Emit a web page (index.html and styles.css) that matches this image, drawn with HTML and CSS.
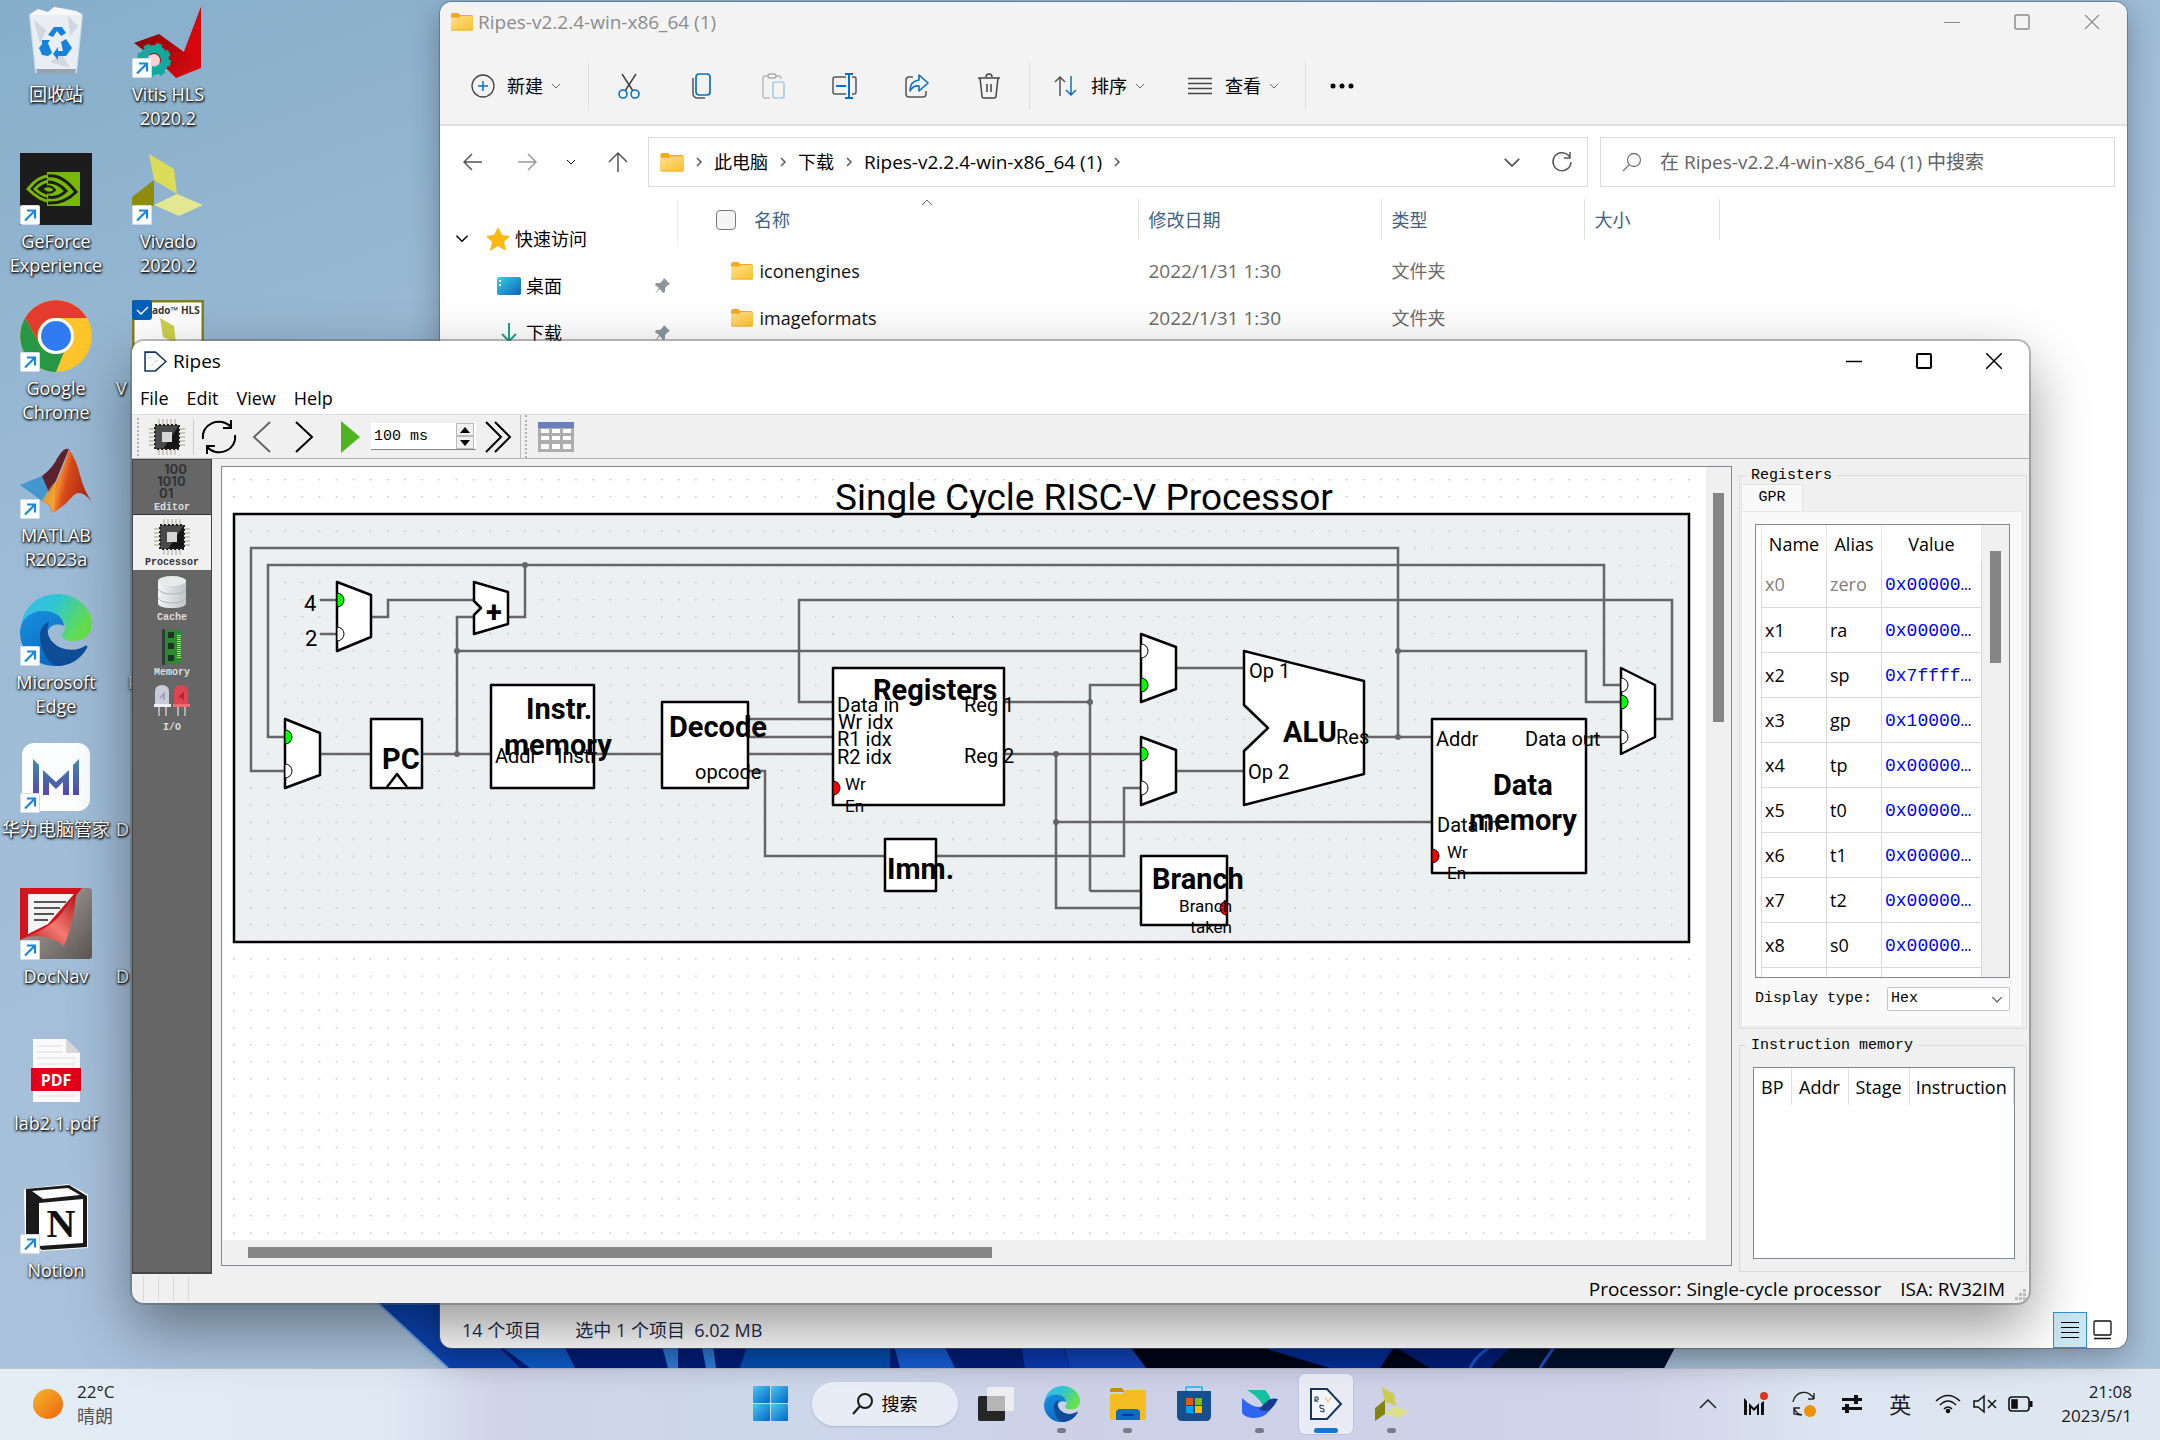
FILE: index.html
```html
<!DOCTYPE html>
<html lang="zh-CN">
<head>
<meta charset="utf-8">
<title>Ripes</title>
<link rel="stylesheet" href="styles.css">
</head>
<body>
<svg class="defs" width="0" height="0" aria-hidden="true">
  <defs>
    <linearGradient id="gFolder" x1="0" y1="0" x2="1" y2="1"><stop offset="0" stop-color="#ffe08a"/><stop offset="1" stop-color="#fbc02f"/></linearGradient>
    <linearGradient id="gEdgeA" x1="0" y1="0" x2="1" y2="0.4"><stop offset="0" stop-color="#39b8f5"/><stop offset="0.5" stop-color="#2fc6cf"/><stop offset="1" stop-color="#66e04b"/></linearGradient>
    <linearGradient id="gEdgeB" x1="0" y1="0" x2="0.6" y2="1"><stop offset="0" stop-color="#1791dd"/><stop offset="1" stop-color="#0a66c2"/></linearGradient>
    <linearGradient id="gM" x1="0" y1="0" x2="0" y2="1"><stop offset="0" stop-color="#3e8fa8"/><stop offset="1" stop-color="#5546b0"/></linearGradient>
    <linearGradient id="gMat" x1="0" y1="0" x2="1" y2="0.3"><stop offset="0" stop-color="#7a1d10"/><stop offset="0.45" stop-color="#f58a2c"/><stop offset="0.6" stop-color="#d84a1c"/><stop offset="1" stop-color="#b02a12"/></linearGradient>
    <linearGradient id="gSun" x1="0" y1="0" x2="1" y2="1"><stop offset="0" stop-color="#f4b62e"/><stop offset="1" stop-color="#f0640c"/></linearGradient>
    <linearGradient id="gWin" x1="0" y1="0" x2="1" y2="1"><stop offset="0" stop-color="#4cc6ee"/><stop offset="1" stop-color="#0067c8"/></linearGradient>
    <linearGradient id="gDesk" x1="0" y1="0" x2="1" y2="1"><stop offset="0" stop-color="#34d3e6"/><stop offset="1" stop-color="#0c62b8"/></linearGradient>
    <linearGradient id="gGrey" x1="0" y1="0" x2="1" y2="1"><stop offset="0" stop-color="#b9b4b0"/><stop offset="1" stop-color="#5c5653"/></linearGradient>
    <linearGradient id="gRed" x1="0" y1="1" x2="1" y2="0"><stop offset="0" stop-color="#b3131a"/><stop offset="0.5" stop-color="#f27a70"/><stop offset="1" stop-color="#b3131a"/></linearGradient>
    <linearGradient id="gVitis" x1="0" y1="0" x2="1" y2="1"><stop offset="0" stop-color="#6d0003"/><stop offset="1" stop-color="#e30b12"/></linearGradient>
    <linearGradient id="gCyl" x1="0" y1="0" x2="1" y2="0"><stop offset="0" stop-color="#f2f3f3"/><stop offset="1" stop-color="#bfc4c6"/></linearGradient>
    <symbol id="shortcut" viewBox="0 0 20 20"><rect x="0.5" y="0.5" width="19" height="19" rx="1" fill="#fff" stroke="#d5dbe6"/><path d="M5 15.500 14 6.500M7 5.500h8v8" fill="none" stroke="#1787e0" stroke-width="2.200"/></symbol>
    <symbol id="folder" viewBox="0 0 22 18"><path d="M0 2q0-2 2-2h5q1 0 2 2h11q2 0 2 2v12q0 1-1 1H1q-1 0-1-1z" fill="#f4a81d"/><path d="M0 4.500h9l1-1.500h11q1 0 1 1v12.500q0 1-1 1H1q-1 0-1-1z" fill="url(#gFolder)"/><path d="M0.500 17h21" stroke="#eeb02c"/></symbol>
    <symbol id="chip" viewBox="0 0 36 36"><path d="M10 0v36M14 0v36M18 0v36M22 0v36M26 0v36M0 10h36M0 14h36M0 18h36M0 22h36M0 26h36" stroke="#c8c7b7" stroke-width="1.800"/><rect x="6" y="6" width="24" height="24" rx="1" fill="#4a4a4a"/><path d="M30 6v24H14z" fill="#161616"/><rect x="6" y="6" width="24" height="24" fill="none" stroke="#222" stroke-width="2" stroke-dasharray="2 2"/><rect x="13" y="13" width="10" height="10" fill="#d6d6d6"/></symbol>
    <symbol id="edge" viewBox="0 0 72 72"><path d="M1 36C1 14 18 0 37 0c22 0 35 16 35 30 0 10-8 17-18 17-7 0-12-2-12-5 0-2 3-4 3-9 0-7-7-13-17-13C14 20 3 28 1 36z" fill="url(#gEdgeA)"/><path d="M0 38c1-14 12-22 26-21 11 1 18 8 18 15-12-5-20 4-16 16 4 13 18 19 32 14-8 8-17 10-25 10C15 72 0 57 0 38z" fill="url(#gEdgeB)"/><path d="M20 42c0-7 4-13 9-14-5 12 3 24 16 27 8 2 15 0 20-3 2-1 3 0 2 2-6 11-17 18-30 18-11-4-17-18-17-30z" fill="#0f4e97"/></symbol>
    <symbol id="sheet" viewBox="0 0 22 20"><path d="M1 1h10l10 9-10 9H1z" fill="#fff" stroke="#12365f" stroke-width="1.500"/><path d="M4 6h4M10 10l3-1M6 14l4-1" stroke="#9db3c9" stroke-dasharray="1 1"/></symbol>
    <symbol id="chev" viewBox="0 0 10 6"><path d="M1 1l4 4 4-4" fill="none" stroke="currentColor" stroke-width="1"/></symbol>
    <symbol id="sep" viewBox="0 0 6 10"><path d="M1 1l4 4-4 4" fill="none" stroke="currentColor" stroke-width="1.500"/></symbol>
    <symbol id="pin" viewBox="0 0 18 18"><path d="M11 1l6 6-2 1-3 3 0 4-2 1-3-4-5 5 4-6-4-3 1-2 4 0 3-3z" fill="#8a959e"/></symbol>
  </defs>
</svg>

<main class="desktop">
  <svg class="wallpaper" viewBox="0 0 1320 80" preserveAspectRatio="none" aria-hidden="true">
    <path d="M0 8 78 80H1294L1320 30V0H0z" fill="#021f7d"/>
    <path d="M0 8 78 80H150L100 30 60 0H0z" fill="#0c46b8"/>
    <path d="M0 8 78 80" stroke="#6ea6ea" stroke-width="2"/>
    <path d="M120 50 160 80H205L190 50z" fill="#0e5fd0"/>
    <path d="M290 50 298 80H308V50zM330 50 336 80H346L342 50z" fill="#2f7fe0"/>
    <path d="M380 50H520V80H370z" fill="#0452b8"/>
    <path d="M522 50 530 80H585L570 50z" fill="#1660dc"/>
    <path d="M650 50 655 80H700L690 50z" fill="#0b3bb8"/>
    <path d="M692 50H752L778 80H700z" fill="#1145bf"/>
    <path d="M754 50H1010L1060 80H776z" fill="#010718"/>
    <path d="M860 50H1030L1010 80H960z" fill="#042f9c"/>
    <path d="M1150 50 1120 80H1294L1310 50z" fill="#03102f"/>
    <path d="M1140 50Q1110 60 1100 80M1190 50 1170 80" stroke="#1d56d6" stroke-width="3" fill="none"/>
  </svg>

  <nav class="icons" aria-label="桌面">
    <a class="shortcut" href="#"><svg class="art" viewBox="0 0 72 72"><path d="M10 8 18 3 28 6 34 1 46 3 56 5 62 8 56 66H16z" fill="#f5f7f9"/><path d="M9 9 63 9 57 67H15z" fill="#e3e9ef" fill-opacity="0.700"/><path d="M14 14 26 24 20 38zM48 10 58 20 50 30zM30 56 42 48 50 62z" fill="#cfd8e0"/><path d="M16 63h40l-1 4H17z" fill="#9aa3ab"/><path d="M28 29l6-8h8l4 6-5 3-4-5-4 6zM46 33l6 9-6 8h-8v4l-5-6 5-7v4h5l-2-9zM22 34l8 0-2 3 4 10-4 3-6-1-3-7 3-4z" fill="#1583dc"/></svg><span class="label">回收站</span></a>
    <a class="shortcut" href="#"><svg class="art" viewBox="0 0 72 72"><rect width="72" height="72" fill="#1c1c1c"/><rect x="27" y="19" width="33" height="34" fill="#76b900"/><path d="M8 36Q18 23 30 23T56 38Q44 50 32 49T8 36z" fill="none" stroke="#76b900" stroke-width="3"/><path d="M15 36Q22 28 31 28T47 37Q40 45 31 44T15 36z" fill="none" stroke="#76b900" stroke-width="3"/><path d="M28 23q14-2 28 16-12 12-28 11M28 29q10 0 18 9-8 8-18 6" fill="none" stroke="#1c1c1c" stroke-width="3"/><path d="M22 36q7-6 13 1-6 6-13-1z" fill="#76b900" stroke="#1c1c1c" stroke-width="2"/><use href="#shortcut" x="0" y="52" width="20" height="20"/></svg><span class="label">GeForce Experience</span></a>
    <a class="shortcut" href="#"><svg class="art" viewBox="0 0 72 72"><circle cx="36" cy="36" r="36" fill="#fdc42c"/><path d="M5 18A36 36 0 0 1 67 18H36A18 18 0 0 0 20 45z" fill="#e33b2e"/><path d="M5 18 20 45A18 18 0 0 0 44 52L36 72A36 36 0 0 1 5 18z" fill="#289745"/><circle cx="36" cy="36" r="18" fill="#fff"/><circle cx="36" cy="36" r="15" fill="#2f7bf0"/><use href="#shortcut" x="0" y="52" width="20" height="20"/></svg><span class="label">Google Chrome</span></a>
    <a class="shortcut" href="#"><svg class="art" viewBox="0 0 72 72"><path d="M0 38 22 29 36 44 22 54z" fill="#4397cf"/><path d="M22 29Q32 22 38 10 44 0 49 2L30 48z" fill="#5c2230"/><path d="M49 2Q56 12 60 28T72 55Q60 40 52 50T32 66Q30 56 22 54 38 40 49 2z" fill="url(#gMat)"/><path d="M22 54Q30 40 36 34L34 66Q30 56 22 54z" fill="#f7b239" fill-opacity="0.700"/><use href="#shortcut" x="0" y="52" width="20" height="20"/></svg><span class="label">MATLAB R2023a</span></a>
    <a class="shortcut" href="#"><svg class="art" viewBox="0 0 72 72"><use href="#edge" width="72" height="72"/><use href="#shortcut" x="0" y="52" width="20" height="20"/></svg><span class="label">Microsoft Edge</span></a>
    <a class="shortcut" href="#"><svg class="art" viewBox="0 0 72 72"><rect x="2" y="2" width="68" height="68" rx="12" fill="#fcfdff"/><path d="M13 18l6 6v30h-6zM59 18l-6 6v30h6zM23 54V29l13 12 13-12v25h-6V41l-7 7-7-7v13z" fill="url(#gM)"/><use href="#shortcut" x="0" y="52" width="20" height="20"/></svg><span class="label">华为电脑管家</span></a>
    <a class="shortcut" href="#"><svg class="art" viewBox="0 0 72 72"><rect width="72" height="71" rx="3" fill="url(#gGrey)"/><path d="M0 0H62L30 40 0 52z" fill="#d2141c"/><path d="M8 6H54L28 36 8 46z" fill="#f3f3f3"/><path d="M14 14h32M14 20h26M14 26h20M14 32h14" stroke="#555" stroke-width="2"/><path d="M0 50Q36 42 56 6 54 34 44 58 28 44 0 50z" fill="url(#gRed)"/><use href="#shortcut" x="0" y="52" width="20" height="20"/></svg><span class="label">DocNav</span></a>
    <a class="shortcut" href="#"><svg class="art" viewBox="0 0 72 72"><path d="M13 4H46L60 18V67H13z" fill="#fafafa"/><path d="M46 4 60 18H46z" fill="#d8d8d8"/><path d="M17 11h25M17 17h25M17 23h38M17 29h38M17 61h38" stroke="#dedede"/><rect x="11" y="33" width="50" height="23" fill="#e2001a"/><text x="36" y="51" text-anchor="middle" class="pdf">PDF</text></svg><span class="label">lab2.1.pdf</span></a>
    <a class="shortcut" href="#"><svg class="art" viewBox="0 0 72 72"><path d="M5 8 48 3 67 13V65L22 68 6 56z" fill="#fff" stroke="#fff" stroke-width="2"/><path d="M6 7 49 3 67 14V65L22 68 6 56z" fill="#1a1a1a"/><path d="M12 9 48 6 60 13 23 17z" fill="#fff"/><path d="M19 21 63 17V61L19 64z" fill="#fff"/><text x="41" y="55" text-anchor="middle" class="notion">N</text><use href="#shortcut" x="0" y="52" width="20" height="20"/></svg><span class="label">Notion</span></a>
    <a class="shortcut" href="#"><svg class="art" viewBox="0 0 72 72"><path d="M2 37 27 28 52 46 69 1V62L44 72 30 58z" fill="url(#gVitis)"/><path d="M69 1V62L52 46z" fill="#d5060c"/><circle cx="22" cy="54" r="11" fill="none" stroke="#10ab9d" stroke-width="8"/><circle cx="22" cy="54" r="15" fill="none" stroke="#10ab9d" stroke-width="4" stroke-dasharray="6 6"/><circle cx="22" cy="54" r="6" fill="#f3d3d6"/><use href="#shortcut" x="0" y="52" width="20" height="20"/></svg><span class="label">Vitis HLS 2020.2</span></a>
    <a class="shortcut" href="#"><svg class="art" viewBox="0 0 72 72"><path d="M17 1 42 16 45 41 22 27z" fill="#dbdd59"/><path d="M22 27V52L0 64V44z" fill="#8d8c0c"/><path d="M22 52 45 41 71 52 47 63z" fill="#e4e792"/><use href="#shortcut" x="0" y="52" width="20" height="20"/></svg><span class="label">Vivado 2020.2</span></a>
    <a class="shortcut cut" href="#"><svg class="art" viewBox="0 0 72 72"><rect x="1" y="1" width="70" height="70" fill="#fff" stroke="#83801a" stroke-width="3"/><text x="20" y="14" class="hls">ado™ HLS</text><path d="M28 18 42 26 44 43 31 37z" fill="#cdd04c"/><rect width="20" height="20" rx="3" fill="#005fb8"/><path d="M5 10l4 4 7-7" fill="none" stroke="#fff" stroke-width="1.500"/></svg><span class="label">V</span></a>
    <span class="shortcut"></span>
    <a class="shortcut cut near" href="#"><span class="art"></span><span class="label">P</span></a>
    <a class="shortcut cut" href="#"><span class="art"></span><span class="label">D</span></a>
    <a class="shortcut cut" href="#"><span class="art"></span><span class="label">D</span></a>
  </nav>

  <section class="explorer" aria-label="Ripes-v2.2.4-win-x86_64 (1)">
    <header class="ex-title">
      <svg width="22" height="18"><use href="#folder"/></svg>
      <h1>Ripes-v2.2.4-win-x86_64 (1)</h1>
      <div class="win-buttons ex-buttons">
        <button aria-label="最小化"><svg width="16" height="16" viewBox="0 0 16 16"><path d="M0 8.500h16" stroke="currentColor"/></svg></button>
        <button aria-label="最大化"><svg width="16" height="16" viewBox="0 0 16 16"><rect x="1" y="1" width="14" height="14" rx="1" fill="none" stroke="currentColor" stroke-width="1.500"/></svg></button>
        <button aria-label="关闭"><svg width="16" height="16" viewBox="0 0 16 16"><path d="M1 1l14 14M15 1 1 15" stroke="currentColor" stroke-width="1.200"/></svg></button>
      </div>
    </header>
    <div class="commands">
      <button class="cmd new"><svg width="24" height="24" viewBox="0 0 24 24" fill="none"><circle cx="12" cy="12" r="11" stroke="#444" stroke-width="1.300"/><path d="M12 7v10M7 12h10" stroke="#0a6fc8" stroke-width="1.500"/></svg>新建<svg class="c" width="10" height="6"><use href="#chev"/></svg></button>
      <div class="tools">
        <button class="tool" aria-label="剪切"><svg width="26" height="26" viewBox="0 0 26 26" fill="none"><path d="M6 1l11 17M20 1 9 18" stroke="#444" stroke-width="1.500"/><circle cx="7" cy="21" r="4" stroke="#0a6fc8" stroke-width="1.600"/><circle cx="19" cy="21" r="4" stroke="#0a6fc8" stroke-width="1.600"/></svg></button>
        <button class="tool" aria-label="复制"><svg width="26" height="26" viewBox="0 0 26 26" fill="none"><path d="M5 5v15q0 5 5 5h7" stroke="#555" stroke-width="1.500"/><rect x="8" y="1" width="14" height="21" rx="3" stroke="#0a6fc8" stroke-width="1.700"/></svg></button>
        <button class="tool" aria-label="粘贴"><svg width="26" height="26" viewBox="0 0 26 26" fill="none"><path d="M10 25H5q-2 0-2-2V5q0-2 2-2h14q2 0 2 3" stroke="#bbb" stroke-width="1.500"/><rect x="8" y="1" width="8" height="4" rx="2" fill="#f3f3f3" stroke="#aaa" stroke-width="1.500"/><rect x="13" y="9" width="11" height="16" rx="2" fill="#f3f3f3" stroke="#a9cde9" stroke-width="1.700"/></svg></button>
        <button class="tool" aria-label="重命名"><svg width="26" height="26" viewBox="0 0 26 26" fill="none"><path d="M14 4H3q-2 0-2 2v13q0 2 2 2h11M20 4h2q2 0 2 2v13q0 2-2 2h-2" stroke="#555" stroke-width="1.500"/><path d="M13 1h8M13 25h8M17 1v24M4 13h10" stroke="#0a6fc8" stroke-width="2"/></svg></button>
        <button class="tool" aria-label="共享"><svg width="26" height="26" viewBox="0 0 26 26" fill="none"><path d="M9 4H5Q2 4 2 7v14q0 3 3 3h14q3 0 3-3v-3" stroke="#555" stroke-width="1.500"/><path d="M15 2l9 8-9 8v-5q-6-1-9 5 0-10 9-11z" stroke="#0a6fc8" stroke-width="1.600" stroke-linejoin="round"/></svg></button>
        <button class="tool" aria-label="删除"><svg width="26" height="26" viewBox="0 0 26 26" fill="none" stroke="#444" stroke-width="1.500"><path d="M2 5h22M10 4q0-3 3-3t3 3M4 5l2 18q0 2 2 2h10q2 0 2-2l2-18M11 11v8M15 11v8"/></svg></button>
      </div>
      <button class="cmd"><svg width="26" height="22" viewBox="0 0 26 22" fill="none"><path d="M7 21V2M2 7l5-5 5 5" stroke="#555" stroke-width="1.500"/><path d="M18 1v19M13 15l5 5 5-5" stroke="#0a6fc8" stroke-width="1.500"/></svg>排序<svg class="c" width="10" height="6"><use href="#chev"/></svg></button>
      <button class="cmd view"><svg width="26" height="18" viewBox="0 0 26 18"><path d="M1 1.500h24M1 6.500h24M1 11.500h24M1 16.500h24" stroke="#444" stroke-width="1.300"/></svg>查看<svg class="c" width="10" height="6"><use href="#chev"/></svg></button>
      <button class="more" aria-label="更多"><svg width="26" height="6" viewBox="0 0 26 6"><circle cx="4" cy="3" r="2.500"/><circle cx="13" cy="3" r="2.500"/><circle cx="22" cy="3" r="2.500"/></svg></button>
    </div>
    <div class="address-row">
      <button aria-label="后退"><svg width="20" height="18" viewBox="0 0 20 18" fill="none" stroke="#555" stroke-width="1.500"><path d="M19 9H1M9 1 1 9l8 8"/></svg></button>
      <button aria-label="前进"><svg width="20" height="18" viewBox="0 0 20 18" fill="none" stroke="#999" stroke-width="1.500"><path d="M1 9h18M11 1l8 8-8 8"/></svg></button>
      <button class="slim" aria-label="最近"><svg width="10" height="6"><use href="#chev"/></svg></button>
      <button aria-label="向上"><svg width="20" height="20" viewBox="0 0 20 20" fill="none" stroke="#555" stroke-width="1.500"><path d="M10 20V2M1 10l9-9 9 9"/></svg></button>
      <div class="address">
        <svg width="24" height="19"><use href="#folder"/></svg>
        <svg width="6" height="10"><use href="#sep"/></svg><a href="#">此电脑</a>
        <svg width="6" height="10"><use href="#sep"/></svg><a href="#">下载</a>
        <svg width="6" height="10"><use href="#sep"/></svg><a href="#" class="latin">Ripes-v2.2.4-win-x86_64 (1)</a>
        <svg width="6" height="10"><use href="#sep"/></svg>
        <button class="end" aria-label="展开"><svg width="18" height="11"><use href="#chev"/></svg></button>
        <button aria-label="刷新"><svg width="22" height="22" viewBox="0 0 22 22" fill="none" stroke="#555" stroke-width="1.500"><path d="M20 11A9 9 0 1 1 17 4l2 2M19 1v6h-6"/></svg></button>
      </div>
      <label class="search"><svg width="20" height="20" viewBox="0 0 20 20" fill="none" stroke="#777" stroke-width="1.300"><circle cx="12" cy="8" r="6.500"/><path d="M7.500 12.500 1 19"/></svg><input type="text" placeholder="在 Ripes-v2.2.4-win-x86_64 (1) 中搜索" aria-label="搜索"></label>
    </div>
    <div class="ex-body">
      <nav class="tree">
        <a href="#" class="quick"><svg width="14" height="9" class="dark"><use href="#chev"/></svg><svg width="24" height="24" viewBox="0 0 24 24"><path d="M12 0l4 8 8 1-6 6 2 9-8-5-8 5 2-9-6-6 8-1z" fill="#fdb813"/></svg>快速访问</a>
        <a href="#" class="leaf"><svg width="24" height="18" viewBox="0 0 24 18"><rect width="24" height="18" rx="2" fill="url(#gDesk)"/><path d="M3 3v2M3 7v2" stroke="#fff" stroke-width="2"/></svg>桌面<svg class="pin" width="18" height="18"><use href="#pin"/></svg></a>
        <a href="#" class="leaf"><svg width="24" height="20" viewBox="0 0 24 20"><path d="M12 0v18M5 11l7 7 7-7" fill="none" stroke="#1da483" stroke-width="2"/></svg>下载<svg class="pin" width="18" height="18"><use href="#pin"/></svg></a>
      </nav>
      <table class="files">
        <colgroup><col class="c-name"><col class="c-date"><col class="c-type"><col class="c-size"><col></colgroup>
        <thead><tr><th><div class="th"><input type="checkbox" aria-label="全选">名称<svg class="sort" width="12" height="7" viewBox="0 0 12 7"><path d="M1 6l5-5 5 5" fill="none" stroke="#666"/></svg></div></th><th><div class="th">修改日期</div></th><th><div class="th">类型</div></th><th><div class="th">大小</div></th><th></th></tr></thead>
        <tbody>
          <tr><td><div class="file"><svg width="22" height="18"><use href="#folder"/></svg>iconengines</div></td><td class="num">2022/1/31 1:30</td><td>文件夹</td><td></td><td></td></tr>
          <tr><td><div class="file"><svg width="22" height="18"><use href="#folder"/></svg>imageformats</div></td><td class="num">2022/1/31 1:30</td><td>文件夹</td><td></td><td></td></tr>
        </tbody>
      </table>
    </div>
    <footer class="ex-status">
      <span>14 个项目</span><span class="sel">选中 1 个项目&nbsp; 6.02 MB</span>
      <button class="on" aria-label="详细信息"><svg width="20" height="18" viewBox="0 0 20 18"><path d="M1 1.500h18M1 6.500h18M1 11.500h18M1 16.500h18" stroke="#111"/></svg></button>
      <button aria-label="大图标"><svg width="20" height="20" viewBox="0 0 20 20" fill="none" stroke="#111" stroke-width="1.300"><rect x="1" y="1" width="17" height="14" rx="1"/><path d="M1 18.500h17"/></svg></button>
    </footer>
  </section>

  <section class="ripes" aria-label="Ripes">
    <header class="rp-title">
      <svg width="23" height="21"><use href="#sheet"/></svg>
      <h2>Ripes</h2>
      <div class="win-buttons">
        <button aria-label="Minimize"><svg width="16" height="16" viewBox="0 0 16 16"><path d="M0 8.500h16" stroke="currentColor" stroke-width="1.300"/></svg></button>
        <button aria-label="Maximize"><svg width="16" height="16" viewBox="0 0 16 16"><rect x="1" y="1" width="14" height="14" rx="1" fill="none" stroke="currentColor" stroke-width="2"/></svg></button>
        <button aria-label="Close"><svg width="16" height="16" viewBox="0 0 16 16"><path d="M0 0l16 16M16 0 0 16" stroke="currentColor" stroke-width="1.500"/></svg></button>
      </div>
    </header>
    <nav class="menubar"><button>File</button><button>Edit</button><button>View</button><button>Help</button></nav>
    <div class="toolbar">
      <span class="grip"></span>
      <button class="t-chip" aria-label="Select processor"><svg width="36" height="36"><use href="#chip"/></svg></button>
      <button class="t-reset" aria-label="Reset"><svg width="36" height="36" viewBox="0 0 36 36" fill="none" stroke="#000" stroke-width="2"><path d="M2 20A16 15 0 0 1 30 8M34 16A16 15 0 0 1 6 28M30 1v8h-8M6 35v-8h8"/></svg></button>
      <button aria-label="Reverse"><svg width="20" height="32" viewBox="0 0 20 32" fill="none" stroke="#666" stroke-width="2"><path d="M18 1 2 16l16 15"/></svg></button>
      <button aria-label="Clock"><svg width="20" height="32" viewBox="0 0 20 32" fill="none" stroke="#000" stroke-width="2"><path d="M2 1l16 15L2 31"/></svg></button>
      <button class="t-play" aria-label="Run"><svg width="19" height="32" viewBox="0 0 19 32"><path d="M0 0 19 16 0 32z" fill="#4eb520"/></svg></button>
      <div class="spin"><input type="text" value="100 ms" aria-label="Interval"><span class="steps"><button aria-label="Up"><svg width="10" height="6"><path d="M5 0l5 6H0z"/></svg></button><button aria-label="Down"><svg width="10" height="6"><path d="M0 0h10L5 6z"/></svg></button></span></div>
      <button class="t-fast" aria-label="Fast forward"><svg width="28" height="32" viewBox="0 0 28 32" fill="none" stroke="#000" stroke-width="2"><path d="M2 1l15 15L2 31M11 1l15 15-15 15"/></svg></button>
      <span class="grip far"></span>
      <button class="t-table" aria-label="Pipeline table"><svg width="36" height="30" viewBox="0 0 36 30"><rect width="36" height="30" fill="#adadad"/><rect width="36" height="6" fill="#6b7fc0"/><path d="M3 7h8v4H3zM14 7h8v4h-8zM25 7h8v4h-8zM3 14h8v4H3zM14 14h8v4h-8zM25 14h8v4h-8zM3 22h8v5H3zM14 22h8v5h-8zM25 22h8v5h-8z" fill="#fff"/></svg></button>
    </div>
    <div class="rp-main">
      <nav class="tabs">
        <button><svg width="36" height="36" viewBox="0 0 36 36" class="bits"><text x="10" y="10">100</text><text x="3" y="22">1010</text><text x="5" y="34">01</text></svg>Editor</button>
        <button class="active"><svg width="36" height="36"><use href="#chip"/></svg>Processor</button>
        <button><svg width="36" height="36" viewBox="0 0 36 36"><path d="M4 7v22q0 5 14 5t14-5V7z" fill="url(#gCyl)"/><ellipse cx="18" cy="7" rx="14" ry="5" fill="#e9ebeb"/><path d="M4 15q3 5 14 5t14-5M4 24q3 5 14 5t14-5" fill="none" stroke="#b3b8ba"/></svg>Cache</button>
        <button><svg width="36" height="36" viewBox="0 0 36 36"><path d="M8 0h3v36H8z" fill="#31403a"/><path d="M11 1h17v29l-4 5H11z" fill="#2a8a2c"/><path d="M14 3h6v6h-6zM14 14h6v6h-6zM14 26h6v6h-6z" fill="#22322b"/><path d="M25 6v24" stroke="#d8cf3a" stroke-width="4" stroke-dasharray="1 1"/></svg>Memory</button>
        <button><svg width="36" height="36" viewBox="0 0 36 36"><path d="M1 20V8Q1 1 8 1t7 7v12z" fill="#c9ccd8"/><path d="M0 20h17v3H0z" fill="#eceef4"/><path d="M6 14l4-4v6" stroke="#9fa5b8" stroke-width="2" fill="none"/><path d="M20 20V8q0-7 7-7t7 7v12z" fill="#de4351"/><path d="M19 20h17v3H19z" fill="#f26a72"/><path d="M25 14l4-4v6" stroke="#b92335" stroke-width="2" fill="none"/><path d="M5 23v9M12 23v9M24 23v9M31 23v9" stroke="#c5c8cf" stroke-width="1.500"/></svg>I/O</button>
      </nav>
      <div class="canvas">
        <div class="viewport">
        <svg class="circuit" width="1484" height="775" viewBox="0 0 1484 775" role="img" aria-label="Single Cycle RISC-V Processor">
          <defs>
            <pattern id="dots" x="11" y="12" width="17.120" height="17.120" patternUnits="userSpaceOnUse"><rect width="1.400" height="1.400" fill="#b9bdbd"/></pattern>
          </defs>
          <rect class="frame-fill" x="12" y="47" width="1455" height="428"/>
          <rect x="10" y="10" width="1460" height="760" fill="url(#dots)"/>
          <rect class="frame" x="12" y="47" width="1455" height="428"/>
          <g class="wires">
            <path d="M1176 270V81H29V304H63"/>
            <path d="M63 270H46V98H1382V218H1399"/>
            <path d="M98 133H115M98 167H115M149 150H166V133H252"/>
            <path d="M286 150H303V98"/>
            <path d="M252 150H235V287M235 184H919"/>
            <path d="M98 287H149M200 287H269M372 287H440"/>
            <path d="M526 252H611M526 270H611M526 287H611"/>
            <path d="M526 304H543V389H663M714 389H902V321H919"/>
            <path d="M1433 252H1450V133H577V235H611"/>
            <path d="M782 235H868M868 424V218H919M868 424H919"/>
            <path d="M782 287H919M834 287V441H919M834 355H1210"/>
            <path d="M954 201H1022M954 304H1022M1142 270H1210"/>
            <path d="M1176 184H1364V235H1399M1364 270H1399"/>
          </g>
          <g class="dots"><circle cx="303" cy="98" r="3"/><circle cx="235" cy="184" r="3"/><circle cx="235" cy="287" r="3"/><circle cx="868" cy="235" r="3"/><circle cx="834" cy="287" r="3"/><circle cx="834" cy="355" r="3"/><circle cx="1176" cy="184" r="3"/><circle cx="1176" cy="270" r="3"/></g>
          <g class="blocks">
            <path d="M63 252 98 266V308L63 321z"/>
            <path d="M115 115 149 128V170L115 184z"/>
            <path d="M919 167 954 180V222L919 235z"/>
            <path d="M919 270 954 283V325L919 338z"/>
            <path d="M1399 201 1433 218V270L1399 287z"/>
            <path d="M252 115 286 125V157L252 167V148L259 141 252 134z"/>
            <path d="M1022 184 1142 214V307L1022 338V284L1046 261 1022 238z"/>
            <rect x="149" y="252" width="51" height="69"/><path d="M165 320 175 307 185 320"/>
            <rect x="269" y="218" width="103" height="103"/>
            <rect x="440" y="235" width="86" height="86"/>
            <rect x="611" y="201" width="171" height="137"/>
            <rect x="663" y="372" width="51" height="52"/>
            <rect x="919" y="389" width="86" height="69"/>
            <rect x="1210" y="252" width="154" height="154"/>
          </g>
          <g class="on"><path d="M63 263A7 7 0 0 1 63 277z"/><path d="M115 126A7 7 0 0 1 115 140z"/><path d="M919 211A7 7 0 0 1 919 225z"/><path d="M919 280A7 7 0 0 1 919 294z"/><path d="M1399 228A7 7 0 0 1 1399 242z"/></g>
          <g class="off"><path d="M63 297A7 7 0 0 1 63 311z"/><path d="M115 160A7 7 0 0 1 115 174z"/><path d="M919 177A7 7 0 0 1 919 191z"/><path d="M919 314A7 7 0 0 1 919 328z"/><path d="M1399 211A7 7 0 0 1 1399 225z"/><path d="M1399 263A7 7 0 0 1 1399 277z"/></g>
          <g class="stop"><path d="M611 314A7 7 0 0 1 611 328z"/><path d="M1210 382A7 7 0 0 1 1210 396z"/><path d="M1005 434A7 7 0 0 0 1005 448z"/></g>
          <text class="heading" x="862" y="43" text-anchor="middle">Single Cycle RISC-V Processor</text>
          <g class="names">
            <text x="160" y="302">PC</text><text x="272" y="155" text-anchor="middle">+</text>
            <text x="304" y="252">Instr.</text><text x="282" y="288">memory</text>
            <text x="447" y="270">Decode</text><text x="651" y="233">Registers</text>
            <text x="665" y="412">Imm.</text><text x="930" y="422">Branch</text>
            <text x="1061" y="275">ALU</text><text x="1271" y="328">Data</text><text x="1247" y="363">memory</text>
          </g>
          <g class="constants"><text x="82" y="144">4</text><text x="83" y="179">2</text></g>
          <g class="ports">
            <text x="273" y="296">Addr</text><text x="335" y="296">Instr</text><text x="473" y="312">opcode</text>
            <text x="615" y="245">Data in</text><text x="616" y="262">Wr idx</text><text x="615" y="279">R1 idx</text><text x="615" y="297">R2 idx</text>
            <text x="742" y="245">Reg 1</text><text x="742" y="296">Reg 2</text>
            <text x="1027" y="211">Op 1</text><text x="1026" y="312">Op 2</text><text x="1114" y="277">Res</text>
            <text x="1214" y="279">Addr</text><text x="1303" y="279">Data out</text><text x="1215" y="365">Data in</text>
          </g>
          <g class="signals">
            <text x="623" y="323">Wr</text><text x="623" y="345">En</text><text x="1225" y="391">Wr</text><text x="1225" y="412">En</text>
            <text x="1010" y="445" text-anchor="end">Branch</text><text x="1010" y="466" text-anchor="end">taken</text>
          </g>
        </svg>
        </div>
        <div class="vscroll"><span class="thumb"></span></div>
        <div class="hscroll"><span class="thumb"></span></div>
      </div>
      <aside class="side">
        <fieldset class="group regs">
          <legend>Registers</legend>
          <div class="tabhead"><button>GPR</button></div>
          <div class="pane">
            <div class="tablebox">
              <div class="clip">
              <table class="regtable">
                <thead><tr><th>Name</th><th>Alias</th><th>Value</th></tr></thead>
                <tbody>
                  <tr class="zero"><td>x0</td><td>zero</td><td>0x00000…</td></tr>
                  <tr><td>x1</td><td>ra</td><td>0x00000…</td></tr>
                  <tr><td>x2</td><td>sp</td><td>0x7ffff…</td></tr>
                  <tr><td>x3</td><td>gp</td><td>0x10000…</td></tr>
                  <tr><td>x4</td><td>tp</td><td>0x00000…</td></tr>
                  <tr><td>x5</td><td>t0</td><td>0x00000…</td></tr>
                  <tr><td>x6</td><td>t1</td><td>0x00000…</td></tr>
                  <tr><td>x7</td><td>t2</td><td>0x00000…</td></tr>
                  <tr><td>x8</td><td>s0</td><td>0x00000…</td></tr>
                  <tr><td></td><td></td><td></td></tr>
                </tbody>
              </table>
              </div>
              <div class="vscroll"><span class="thumb"></span></div>
            </div>
            <div class="display"><label for="fmt">Display type:</label><span class="pick"><select id="fmt"><option>Hex</option></select><svg width="12" height="7"><use href="#chev"/></svg></span></div>
          </div>
        </fieldset>
        <fieldset class="group imem">
          <legend>Instruction memory</legend>
          <div class="imembox"><table><thead><tr><th>BP</th><th>Addr</th><th>Stage</th><th>Instruction</th></tr></thead></table></div>
        </fieldset>
      </aside>
    </div>
    <footer class="rp-status"><i></i><i></i><i></i><i></i><span class="proc">Processor: Single-cycle processor</span><span>ISA: RV32IM</span><svg width="12" height="12" viewBox="0 0 12 12" fill="#bdbdbd"><path d="M8 0h3v3H8zM8 4h3v3H8zM4 4h3v3H4zM8 8h3v3H8zM4 8h3v3H4zM0 8h3v3H0z"/></svg></footer>
  </section>
</main>

<footer class="taskbar">
  <button class="weather"><svg width="32" height="32" viewBox="0 0 32 32"><circle cx="16" cy="16" r="15" fill="url(#gSun)"/></svg><span class="lines"><span>22°C</span><span class="dim">晴朗</span></span></button>
  <div class="apps">
    <button aria-label="开始"><svg width="36" height="36" viewBox="0 0 36 36" fill="url(#gWin)"><rect width="17" height="17" rx="1"/><rect x="18" width="17" height="17" rx="1"/><rect y="18" width="17" height="17" rx="1"/><rect x="18" y="18" width="17" height="17" rx="1"/></svg></button>
    <button class="find"><svg width="22" height="22" viewBox="0 0 22 22" fill="none" stroke="#1b1b1b" stroke-width="2"><circle cx="13" cy="8" r="7"/><path d="M8 13 1 21"/></svg>搜索</button>
    <button aria-label="任务视图"><svg width="36" height="36" viewBox="0 0 36 36"><rect y="10" width="27" height="25" rx="2" fill="#262626"/><rect x="9" y="1" width="27" height="24" rx="2" fill="#f2f2f2" fill-opacity="0.850"/><rect x="9" y="10" width="18" height="15" fill="#b5b5b5"/></svg></button>
    <button class="run" aria-label="Microsoft Edge"><svg width="36" height="36"><use href="#edge"/></svg></button>
    <button class="run" aria-label="文件资源管理器"><svg width="36" height="36" viewBox="0 0 36 36"><path d="M0 4q0-2 2-2h10l3 4H0z" fill="#c98b0c"/><path d="M0 8h12l4-4h18q2 0 2 2v26q0 2-2 2H2q-2 0-2-2z" fill="#f5bd22"/><path d="M6 34V27q0-4 4-4h16q4 0 4 4v7z" fill="#0f6cbd"/><path d="M12 29h12" stroke="#0a3f77" stroke-width="2"/></svg></button>
    <button aria-label="Microsoft Store"><svg width="36" height="36" viewBox="0 0 36 36"><path d="M10 8V2q0-1 1-1h14q1 0 1 1v6" fill="none" stroke="#35bdf0" stroke-width="2"/><path d="M1 5h34v25q0 5-5 5H6q-5 0-5-5z" fill="#174e8c"/><path d="M10 12h7v7h-7z" fill="#f25022"/><path d="M19 12h7v7h-7z" fill="#7fba00"/><path d="M10 20h7v7h-7z" fill="#00a4ef"/><path d="M19 20h7v7h-7z" fill="#ffb900"/></svg></button>
    <button class="run" aria-label="飞书"><svg width="36" height="36" viewBox="0 0 36 36"><path d="M5 4h18q5 5 6 11l-7 6Q17 11 5 4z" fill="#10c3a3"/><path d="M0 12q12 12 24 8l5 3Q22 33 10 32 0 30 0 26z" fill="#2e66f0"/><path d="M36 13q-8-2-13 4l-6 6q6 4 12 0 4-4 7-10z" fill="#163a8c"/></svg></button>
    <button class="run active" aria-label="Ripes"><svg width="36" height="36" viewBox="0 0 36 36"><path d="M3 3h16l14 15-14 15H3z" fill="#f4f5fa" stroke="#12365f" stroke-width="2"/><path d="M7 16v-5h3v3H7l3 2" stroke="#12365f" fill="none"/><path d="M17 11l3 5 3-5" stroke="#e8b65a" fill="none"/><path d="M16 20l-4-1v3l4 1v3l-4-1" stroke="#12365f" fill="none"/></svg></button>
    <button class="run" aria-label="Vivado"><svg width="36" height="36" viewBox="0 0 36 36"><path d="M8 1 20 8 22 20 10 15z" fill="#cbcc52"/><path d="M11 14V28L1 35V22z" fill="#84830f"/><path d="M11 27 22 20 35 26 23 32z" fill="#dcdf86"/></svg></button>
  </div>
  <div class="tray">
    <button class="t1" aria-label="显示隐藏的图标"><svg width="18" height="10" viewBox="0 0 18 10"><path d="M1 9l8-8 8 8" fill="none" stroke="#222" stroke-width="1.500"/></svg></button>
    <button class="t2" aria-label="电脑管家"><svg width="26" height="24" viewBox="0 0 26 24"><path d="M1 6l3 3v14H1zM21 9v14h-3V11zM6 23V11l5 5 5-5v12h-2v-7l-3 3-3-3v7z" fill="#111"/><circle cx="21" cy="4" r="4" fill="#d9361f"/></svg></button>
    <button class="t3" aria-label="更新"><svg width="26" height="26" viewBox="0 0 26 26" fill="none" stroke="#222" stroke-width="1.400"><path d="M2 11A11 11 0 0 1 23 8V2M23 8h-6M10 24l-7-1v-6h6M3 17q2 6 8 7"/><circle cx="19" cy="20" r="6" fill="#f29100" stroke="none"/></svg></button>
    <button class="t4" aria-label="设置"><svg width="22" height="18" viewBox="0 0 22 18" stroke="#111" stroke-width="3"><path d="M1 4.500h20M1 13.500h20"/><path d="M15 0v9M6 9v9" stroke-width="4"/></svg></button>
    <button class="t5">英</button>
    <button class="t6" aria-label="网络"><svg width="26" height="20" viewBox="0 0 26 20" fill="none" stroke="#111" stroke-width="1.600"><path d="M1 7Q13-4 25 7M5 11q8-8 16 0M9 15q4-4 8 0"/><circle cx="13" cy="17" r="1.500" fill="#111"/></svg></button>
    <button class="t7" aria-label="音量"><svg width="24" height="20" viewBox="0 0 24 20" fill="none" stroke="#111" stroke-width="1.500"><path d="M1 7h4l6-5v16l-6-5H1zM15 6l8 8M23 6l-8 8"/></svg></button>
    <button class="t8" aria-label="电池"><svg width="26" height="18" viewBox="0 0 26 18" fill="none" stroke="#111" stroke-width="1.600"><rect x="1" y="2" width="20" height="14" rx="3"/><rect x="4" y="5" width="5" height="8" fill="#111"/><path d="M23 6v6" stroke-width="3"/></svg></button>
    <button class="clock lines"><span>21:08</span><span>2023/5/1</span></button>
  </div>
</footer>
</body>
</html>
```

FILE: styles.css
```css
* { box-sizing: border-box; }

body {
  margin: 0;
  min-height: 100vh;
  display: flex;
  flex-direction: column;
  overflow: hidden;
  font: 18px/24px "Open Sans", "Noto Sans CJK SC", sans-serif;
  color: #000;
  background: #9db9d3;
}

button {
  border: 0;
  padding: 0;
  background: none;
  color: inherit;
  font: inherit;
  display: inline-flex;
  align-items: center;
  justify-content: center;
}

a { color: inherit; text-decoration: none; }
svg { display: block; flex: none; }
.defs { position: absolute; }

/* Desktop */
.desktop {
  position: relative;
  flex: 1;
  padding-top: 6px;
  background: linear-gradient(160deg, #86aecb 0%, #9bbad5 25%, #a9c1db 60%, #a6c0d8 100%);
}

.wallpaper {
  position: absolute;
  left: 370px;
  right: 470px;
  bottom: 0;
  width: calc(100% - 840px);
  height: 80px;
}

.icons {
  position: relative;
  display: grid;
  grid-auto-flow: column;
  grid-template-rows: repeat(9, 147px);
  grid-template-columns: 112px 112px;
  width: 224px;
}

.shortcut {
  display: flex;
  flex-direction: column;
  align-items: center;
  gap: 4px;
  color: #fff;
  font-size: 18px;
  text-align: center;
  text-shadow: 1px 1px 2px #000, 0 1px 3px #000;
}
.shortcut .art { width: 72px; height: 72px; }
.shortcut .label { padding: 0 4px; white-space: normal; }
.shortcut:nth-child(6) .label { padding: 0; }
.cut .label { align-self: flex-start; }
.near .label { padding-left: 16px; }
.pdf { font: bold 16px "Open Sans", sans-serif; fill: #fff; text-shadow: none; }
.notion { font: bold 40px "Liberation Serif", serif; fill: #111; text-shadow: none; }
.hls { font: bold 10px "Open Sans", sans-serif; fill: #333; text-shadow: none; }

/* File explorer */
.explorer {
  position: absolute;
  left: 440px;
  right: 33px;
  top: 2px;
  bottom: 20px;
  display: flex;
  flex-direction: column;
  border-radius: 12px;
  overflow: hidden;
  background: #fff;
  box-shadow: 0 0 0 1px rgba(80, 100, 120, .6), 0 8px 30px rgba(0, 0, 0, .3);
}

.ex-title {
  display: flex;
  align-items: center;
  gap: 5px;
  height: 40px;
  padding-left: 11px;
  background: #f3f3f3;
  color: #8c8c8c;
}
h1, h2 { margin: 0; font-size: 19px; font-weight: 400; }
.win-buttons { margin-left: auto; display: flex; }
.win-buttons button { width: 70px; height: 38px; }

.commands {
  display: flex;
  align-items: center;
  height: 84px;
  background: #f3f3f3;
  border-bottom: 2px solid #dedede;
  padding: 5px 0 0 31px;
}
.cmd { gap: 12px; }
.cmd .c { margin-left: -4px; color: #666; }
.new { margin-right: 27px; }
.tools {
  display: flex;
  height: 48px;
  align-items: center;
  border: solid #dedede;
  border-width: 0 1px;
  padding: 0 4px;
  margin-right: 23px;
}
.tool { width: 72px; }
.view { margin-left: 42px; }
.more { height: 48px; border-left: 1px solid #dedede; margin-left: 26px; padding-left: 23px; }

.address-row { display: flex; padding: 11px 12px 0 6px; }
.address-row > button { width: 54px; }
.address-row > button.slim { width: 34px; }
.address-row > button:nth-child(4) { width: 60px; }
.address, .search {
  display: flex;
  align-items: center;
  height: 50px;
  border: 1px solid #d9d9d9;
}
.address { flex: 1; gap: 12px; padding: 0 14px 0 11px; }
.address svg { color: #555; }
.address .latin { font-size: 19px; }
.end { margin-left: auto; margin-right: 18px; }
.search { flex: 0 1 515px; gap: 18px; margin-left: 12px; padding-left: 21px; }
.search input {
  flex: 1;
  min-width: 0;
  border: 0;
  outline: 0;
  padding: 0;
  background: none;
  font: inherit;
  font-size: 19px;
}
.search input::placeholder { color: #636363; opacity: 1; }

.ex-body { flex: 1; display: flex; }
.tree { width: 237px; padding-top: 28px; }
.tree a { display: flex; align-items: center; height: 47px; gap: 5px; }
.tree .quick { padding-left: 15px; }
.quick .dark { margin-right: 12px; }
.tree .leaf { padding-left: 57px; }
.pin { margin-left: auto; margin-right: 6px; }

.files {
  flex: 1;
  margin-top: 12px;
  border-collapse: collapse;
  table-layout: fixed;
  align-self: flex-start;
  color: #6b6b6b;
}
.c-name { width: 461px; }
.c-date { width: 243px; }
.c-type { width: 203px; }
.c-size { width: 135px; }
.files th { padding: 0; height: 48px; vertical-align: top; font-weight: 400; color: #42607f; }
.files th:first-child { border-left: 1px solid #eee; }
.th {
  position: relative;
  display: flex;
  align-items: center;
  height: 41px;
  padding-left: 10px;
  border-right: 1px solid #e2e2e2;
}
.th input {
  appearance: none;
  width: 20px;
  height: 20px;
  margin: 0 18px 0 28px;
  border: 1px solid #777;
  border-radius: 4px;
  background: #f5f5f5;
}
.sort { position: absolute; top: 0; left: 243px; }
.files td { height: 47px; padding: 0 0 0 10px; }
.files td.num { font-size: 19px; }
.file { display: flex; align-items: center; gap: 7px; padding-left: 43px; color: #111; }

.ex-status {
  display: flex;
  align-items: center;
  height: 36px;
  padding: 0 24px 0 22px;
  color: #1d2d4d;
}
.ex-status .sel { margin-left: 34px; margin-right: auto; }
.ex-status button { width: 34px; height: 36px; margin-right: 6px; }
.ex-status button:last-child { width: 20px; margin: 0 -10px 0 0; }
.ex-status .on { background: #cce8f4; border: 1px solid #2697d5; }

/* Ripes */
.ripes {
  position: absolute;
  left: 132px;
  right: 131px;
  top: 341px;
  bottom: 65px;
  display: flex;
  flex-direction: column;
  border-radius: 12px;
  overflow: hidden;
  background: #f0f0f0;
  box-shadow: 0 0 0 2px rgba(90, 90, 90, .4), 0 24px 60px rgba(0, 0, 0, .42);
}
.rp-title {
  display: flex;
  align-items: center;
  gap: 6px;
  height: 40px;
  padding-left: 12px;
  background: #fff;
}
.menubar { display: flex; gap: 18px; height: 33px; padding-left: 8px; background: #fff; }
.toolbar {
  display: flex;
  align-items: center;
  height: 45px;
  padding-left: 5px;
  border-top: 1px solid #ddd;
  border-bottom: 1px solid #b4b4b4;
}
.grip { width: 2px; height: 38px; border-left: 2px dotted #b0b0b0; }
.t-chip { margin-left: 10px; padding-right: 8px; border-right: 1px solid #ccc; }
.toolbar button + button + button { margin-right: 22px; }
.toolbar .t-reset { margin: 0 15px 0 7px; }
.toolbar .t-play { margin: 0 11px 0 5px; }
.spin {
  display: flex;
  width: 105px;
  height: 27px;
  background: #fff;
  border-bottom: 1px solid #868686;
}
.spin input {
  width: 85px;
  border: 0;
  padding: 0 0 0 3px;
  background: none;
  font: 15px "Liberation Mono", monospace;
}
.steps { display: flex; flex-direction: column; width: 18px; }
.steps button { flex: 1; border: 1px solid #bbb; background: #f0f0f0; }
.t-fast { margin: 0 8px; }
.far { height: 43px; border-left: 1px solid #bbb; width: 7px; border-right: 2px dotted #b0b0b0; }
.t-table { margin-left: 11px; }

.rp-main { flex: 1; display: flex; min-height: 0; }
.tabs { width: 80px; background: #666; border: 1px solid #444; border-width: 1px 1px 2px; }
.tabs button {
  width: 100%;
  height: 55px;
  padding-top: 3px;
  gap: 2px;
  flex-direction: column;
  font: bold 10px/12px "Liberation Mono", monospace;
  color: #ddd;
}
.tabs button:first-child { border-bottom: 1px solid #333; }
.tabs .active { background: #f0f0f0; color: #333; }
.bits { font: bold 13px "Inter", sans-serif; fill: #333; }

.canvas {
  flex: 1;
  min-width: 0;
  margin: 7px 7px 8px 9px;
  display: grid;
  grid-template: 1fr 25px / 1fr 25px;
  border: 1px solid #828790;
}
.viewport { overflow: hidden; background: #fff; min-width: 0; min-height: 0; }
.vscroll { padding: 26px 7px 0; }
.vscroll .thumb { display: block; height: 229px; background: #858585; }
.hscroll { padding: 7px 0 0 26px; }
.hscroll .thumb { display: block; width: 51%; height: 11px; background: #858585; }

.frame-fill { fill: #ecf0f1; }
.frame { fill: none; stroke: #000; stroke-width: 2.5; }
.wires { fill: none; stroke: #666; stroke-width: 2.5; }
.dots { fill: #666; }
.blocks { fill: #fff; stroke: #000; stroke-width: 2.5; stroke-linejoin: round; }
.on path { fill: #0f0; stroke: #000; }
.off path { fill: #fff; stroke: #000; }
.stop path { fill: #f00; stroke: #000; }
.circuit { font-family: Roboto, sans-serif; }
.heading { font-size: 37px; }
.names { font-size: 29px; font-weight: 700; }
.constants { font-size: 22px; }
.ports { font-size: 20px; }
.signals { font-size: 17px; }

.side { width: 290px; padding: 7px 2px 0 0; display: flex; flex-direction: column; }
.group {
  margin: 0;
  min-width: 0;
  padding: 0 3px 1px 1px;
  border: 1px solid #dcdcdc;
  font: 15px/20px "Liberation Mono", monospace;
}
.group legend { margin-left: 5px; padding: 0 5px; height: 18px; line-height: 20px; }
.tabhead { display: flex; }
.tabhead button {
  width: 62px;
  height: 27px;
  border: 1px solid #e3e3e3;
  border-bottom: 0;
  background: #f9f9f9;
}
.pane { padding: 12px 12px 15px 13px; background: #f9f9f9; border: 1px solid #e8e8e8; }
.tablebox {
  display: grid;
  grid-template-columns: 1fr 27px;
  height: 454px;
  border: 1px solid #828790;
  background: #fff;
}
.tablebox .vscroll { padding: 26px 8px 0; background: #f0f0f0; }
.tablebox .thumb { height: 112px; }
.clip { overflow: hidden; padding-left: 5px; height: 452px; }
.regtable { width: 100%; border-collapse: collapse; table-layout: fixed; font: 18px/24px "Open Sans", sans-serif; }
.regtable th { height: 37px; padding: 0; font-weight: 400; border: solid #e5e5e5; border-width: 0 1px; }
.regtable th:nth-child(1) { width: 65px; }
.regtable th:nth-child(2) { width: 55px; }
.regtable td { height: 45px; padding: 0 0 0 3px; border: 1px solid #d8d8d8; }
.regtable tr.zero td { border-top: 0; }
.regtable td:nth-child(3) { padding-top: 2px; font: 18px/24px "Liberation Mono", monospace; color: #00f; }
.zero td:nth-child(-n+2) { color: #808080; }
.display { display: flex; align-items: center; justify-content: space-between; margin-top: 9px; }
.pick { position: relative; }
.pick svg { position: absolute; right: 7px; top: 9px; color: #555; }
.pick select {
  appearance: none;
  display: block;
  width: 123px;
  height: 24px;
  padding: 0 3px;
  border: 1px solid #c4c4c4;
  border-radius: 2px;
  background: #fff;
  font: inherit;
}
.imem { flex: 1; margin: 7px 0 2px; padding: 13px 11px 12px 13px; display: flex; flex-direction: column; }
.imem legend { margin-left: -7px; }
.imembox { height: 192px; border: 1px solid #828790; background: #fff; }
.imem table { width: 100%; border-collapse: collapse; table-layout: fixed; font: 18px/24px "Open Sans", sans-serif; }
.imem th { height: 37px; padding: 0; font-weight: 400; border-right: 1px solid #e0e0e0; }
.imem th:nth-child(1) { width: 37px; }
.imem th:nth-child(2) { width: 57px; }
.imem th:nth-child(3) { width: 61px; }

.rp-status { display: flex; align-items: center; height: 29px; padding-left: 11px; font-size: 19px; }
.rp-status i { width: 15px; height: 25px; border-left: 1px solid #d8d8d8; }
.rp-status .proc { margin: 0 19px 0 auto; }
.rp-status svg { margin: 12px 2px 0 10px; }

/* Taskbar */
.taskbar {
  display: grid;
  grid-template-columns: 1fr auto 1fr;
  align-items: center;
  height: 72px;
  padding-bottom: 1px;
  border-top: 1px solid #bcc5d3;
  background: linear-gradient(90deg, #e2edf6 0%, #dfe9f4 18%, #cfd4e7 23%, #ccd7ea 35%, #cdd1e8 50%, #cfd2e8 75%, #dbe4f0 84%, #dfe8f2 100%);
  font-size: 17px;
  line-height: 24px;
}
.lines { display: flex; flex-direction: column; align-items: flex-start; }
.weather { justify-self: start; margin-left: 32px; gap: 13px; color: #222; }
.dim { color: #555; font-size: 18px; }
.apps { display: flex; align-items: center; margin-left: 8px; }
.apps button { position: relative; width: 66px; height: 60px; }
.apps button:first-child { width: 54px; }
.apps .find {
  width: 146px;
  height: 44px;
  margin: 0 5px 0 14px;
  gap: 8px;
  border-radius: 22px;
  background: rgba(255, 255, 255, .55);
  box-shadow: 0 1px 2px rgba(90, 100, 140, .3);
  font-size: 18px;
}
.run::after {
  content: "";
  position: absolute;
  bottom: 1px;
  width: 9px;
  height: 5px;
  border-radius: 3px;
  background: #777c88;
}
.apps .active {
  width: 54px;
  margin: 0 6px;
  border-radius: 6px;
  background: rgba(255, 255, 255, .55);
  box-shadow: 0 0 0 1px rgba(180, 185, 210, .6);
}
.active::after { width: 24px; background: #0f77d4; }
.tray { display: flex; align-items: center; justify-content: flex-end; padding-right: 28px; color: #1b1b1b; }
.tray button { width: 48px; }
.tray .t5 { font-size: 22px; }
.tray .t6 { width: 38px; margin-left: 5px; }
.tray .t7, .tray .t8 { width: 36px; }
.tray .clock { width: auto; align-items: flex-end; margin-left: 22px; }
```
